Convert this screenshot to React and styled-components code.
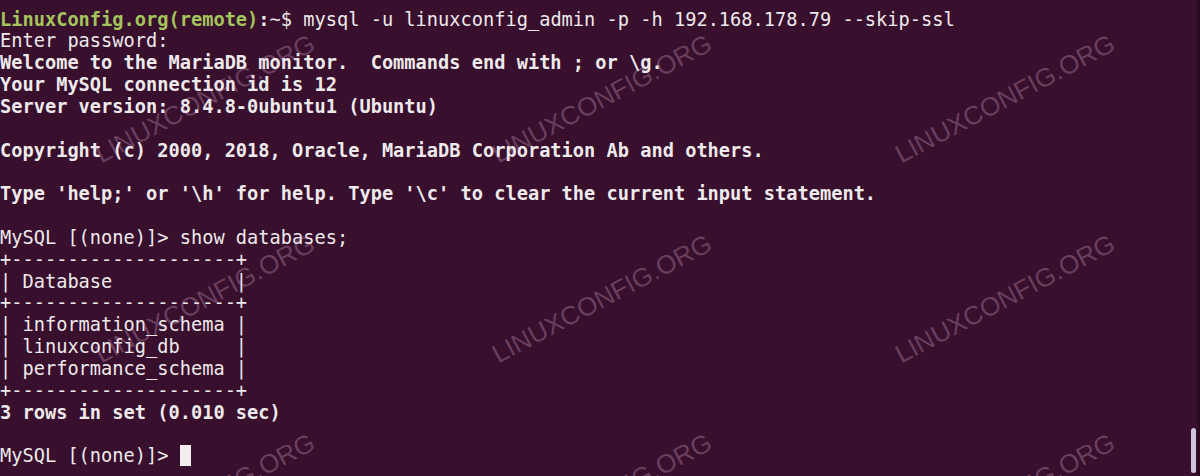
import React from "react";
import styled, { createGlobalStyle } from "styled-components";

const GlobalStyle = createGlobalStyle`
    html, body {
        margin: 0;
        padding: 0;
        background: #380f2c;
    }
`

const lines = [
    { text: "Enter password:" },
    { text: "Welcome to the MariaDB monitor.  Commands end with ; or \\g.", bold: true },
    { text: "Your MySQL connection id is 12", bold: true },
    { text: "Server version: 8.4.8-0ubuntu1 (Ubuntu)", bold: true },
    { text: "" },
    { text: "Copyright (c) 2000, 2018, Oracle, MariaDB Corporation Ab and others.", bold: true },
    { text: "" },
    { text: "Type 'help;' or '\\h' for help. Type '\\c' to clear the current input statement.", bold: true },
    { text: "" },
    { text: "MySQL [(none)]> show databases;" },
    { text: "+--------------------+" },
    { text: "| Database           |" },
    { text: "+--------------------+" },
    { text: "| information_schema |" },
    { text: "| linuxconfig_db     |" },
    { text: "| performance_schema |" },
    { text: "+--------------------+" },
    { text: "3 rows in set (0.010 sec)", bold: true },
    { text: "" },
]

const markCols = [205, 602, 1005]
const markRows = [99, 299, 498]

const App = () => {
    const renderLines = () => {
        return lines.map(({ text, bold }, i) => (
            <Line key={i} bold={bold}>{text || "\u00a0"}</Line>
        ))
    }

    const renderMarks = () => {
        return markRows.flatMap((y) =>
            markCols.map((x) => (
                <Mark key={`${x}-${y}`} style={{ left: x, top: y }}>
                    LINUXCONFIG.ORG
                </Mark>
            ))
        )
    }

    return (
        <>
            <GlobalStyle />
            <Terminal>
                <Screen>
                    <Line>
                        <Host>LinuxConfig.org(remote)</Host>
                        <Colon>:</Colon>~$ mysql -u linuxconfig_admin -p -h 192.168.178.79 --skip-ssl
                    </Line>
                    {renderLines()}
                    <Line>
                        MySQL [(none)]&gt; <Cursor />
                    </Line>
                </Screen>
                <Watermarks>{renderMarks()}</Watermarks>
                <ScrollTrack>
                    <ScrollThumb />
                </ScrollTrack>
            </Terminal>
        </>
    )
}

export default App

const Terminal = styled.div`
    position: relative;
    width: 1200px;
    height: 476px;
    overflow: hidden;
    background-color: #380f2c;
`

const Screen = styled.div`
    display: flex;
    flex-direction: column;
    padding: 8.5px 0 0 0;
    font-family: "DejaVu Sans Mono", "Liberation Mono", monospace;
    font-size: 18.67px;
    line-height: 21.85px;
    color: #eeeaec;
`

const Line = styled.div`
    height: 21.85px;
    flex-shrink: 0;
    white-space: pre;
    font-weight: ${({ bold }) => (bold ? 700 : 400)};
`

const Host = styled.span`
    color: #a3c55c;
    font-weight: 700;
`

const Colon = styled.span`
    font-weight: 700;
`

const Cursor = styled.span`
    display: inline-block;
    width: 11.2px;
    height: 21px;
    vertical-align: top;
    background-color: #f2eef0;
`

const Watermarks = styled.div`
    position: absolute;
    inset: 0;
    pointer-events: none;
`

const Mark = styled.div`
    position: absolute;
    transform: translate(-50%, -50%) rotate(-28deg);
    font-family: "Liberation Sans", Arial, sans-serif;
    font-size: 26px;
    white-space: nowrap;
    color: rgba(235, 190, 225, 0.28);
`

const ScrollTrack = styled.div`
    position: absolute;
    top: 0;
    right: 0;
    bottom: 0;
    width: 10px;
    border-right: 3px solid #2a0a20;
`

const ScrollThumb = styled.div`
    position: absolute;
    right: 1px;
    bottom: 3px;
    width: 5px;
    height: 45px;
    border-radius: 3px;
    background-color: #cbc4e0;
`
